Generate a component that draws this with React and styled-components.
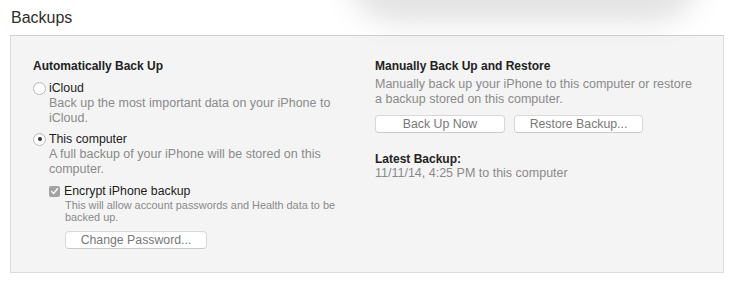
import React from "react";
import styled, { createGlobalStyle } from "styled-components";

const Global = createGlobalStyle`
  html, body { margin: 0; padding: 0; background: #ffffff; }
  body { font-family: "Liberation Sans", Arial, Helvetica, sans-serif; -webkit-font-smoothing: antialiased; }
`;

const Page = styled.div`
  position: relative;
  width: 732px;
  height: 286px;
  overflow: hidden;
  padding: 8px 9px 0 10px;
  box-sizing: border-box;
`;

const SheetShadow = styled.div`
  position: absolute;
  top: -62px;
  left: 365px;
  width: 318px;
  height: 62px;
  border-radius: 50px;
  background: #e6e6e6;
  box-shadow: 0 4px 28px 16px rgba(0, 0, 0, 0.13);
  filter: blur(7px);
`;

const Heading = styled.h2`
  margin: 0 0 0 1px;
  font-size: 16px;
  line-height: 19px;
  font-weight: normal;
  color: #2e2e2e;
`;

const Panel = styled.section`
  margin-top: 8px;
  width: 714px;
  height: 238px;
  box-sizing: border-box;
  background: #f4f4f4;
  border: 1px solid #dcdcdc;
  border-top-color: #d0d0d0;
  display: grid;
  grid-template-columns: 342px 1fr;
  padding: 23px 0 0 22px;
`;

const Column = styled.div`
  display: flex;
  flex-direction: column;
  align-items: flex-start;
`;

const SectionTitle = styled.div`
  font-size: 12px;
  line-height: 14px;
  font-weight: bold;
  color: #222222;
  margin-top: ${(p) => p.$mt ?? 0}px;
`;

const OptionRow = styled.label`
  display: flex;
  align-items: center;
  gap: ${(p) => p.$gap ?? 3}px;
  height: 16px;
  margin-top: ${(p) => p.$mt ?? 0}px;
  margin-left: ${(p) => p.$ml ?? 0}px;
  font-size: 12.3px;
  color: #1c1c1c;
`;

const Radio = styled.span`
  width: 11px;
  height: 11px;
  border-radius: 50%;
  border: 1px solid #b9b9b9;
  background: #ffffff;
  box-shadow: inset 0 1px 1px rgba(0, 0, 0, 0.05);
  display: flex;
  align-items: center;
  justify-content: center;
  flex: none;
  &::after {
    content: "";
    width: 4px;
    height: 4px;
    border-radius: 50%;
    background: ${(p) => (p.$checked ? "#333" : "transparent")};
  }
`;

const Checkbox = styled.span`
  width: 11px;
  height: 11px;
  border-radius: 2px;
  background: #a3a3a3;
  display: flex;
  align-items: center;
  justify-content: center;
  flex: none;
`;

const Description = styled.div`
  font-size: 12.5px;
  line-height: 15px;
  color: #8a8a8a;
  margin-left: ${(p) => p.$ml ?? 16}px;
  width: ${(p) => p.$w ?? 300}px;
  margin-top: ${(p) => p.$mt ?? 0}px;
`;

const SmallNote = styled.div`
  font-size: 10.9px;
  line-height: 12px;
  color: #8a8a8a;
  margin-left: 32px;
  width: 280px;
`;

const Button = styled.button`
  height: 18px;
  width: ${(p) => p.$w}px;
  box-sizing: border-box;
  background: #ffffff;
  border: 1px solid #d8d8d8;
  border-bottom-color: #cacaca;
  border-radius: 4px;
  font-family: inherit;
  font-size: 12.3px;
  color: #787878;
  padding: 0;
  line-height: 16px;
  margin-left: ${(p) => p.$ml ?? 0}px;
  margin-top: ${(p) => p.$mt ?? 0}px;
`;

const ButtonRow = styled.div`
  display: flex;
  gap: 9px;
  margin-top: ${(p) => p.$mt ?? 0}px;
`;

const Value = styled.div`
  font-size: 12.5px;
  line-height: 14px;
  color: #8a8a8a;
`;

export default function App() {
  return (
    <>
      <Global />
      <Page>
        <SheetShadow />
        <Heading>Backups</Heading>
        <Panel>
          <Column>
            <SectionTitle>Automatically Back Up</SectionTitle>
            <OptionRow $mt={7}>
              <Radio />
              iCloud
            </OptionRow>
            <Description $w={290}>Back up the most important data on your iPhone to iCloud.</Description>
            <OptionRow $mt={5}>
              <Radio $checked />
              This computer
            </OptionRow>
            <Description $w={290}>A full backup of your iPhone will be stored on this computer.</Description>
            <OptionRow $mt={6} $ml={16} $gap={4}>
              <Checkbox>
                <svg width="9" height="9" viewBox="0 0 9 9">
                  <path d="M1.6 4.6 L3.6 6.6 L7.4 1.8" fill="none" stroke="#ffffff" strokeWidth="1.4" strokeLinecap="round" strokeLinejoin="round" />
                </svg>
              </Checkbox>
              Encrypt iPhone backup
            </OptionRow>
            <SmallNote>This will allow account passwords and Health data to be backed up.</SmallNote>
            <Button $w={142} $ml={32} $mt={8}>Change Password...</Button>
          </Column>
          <Column>
            <SectionTitle>Manually Back Up and Restore</SectionTitle>
            <Description $ml={0} $w={322} $mt={4}>
              Manually back up your iPhone to this computer or restore a backup stored on this computer.
            </Description>
            <ButtonRow $mt={8}>
              <Button $w={130}>Back Up Now</Button>
              <Button $w={129}>Restore Backup...</Button>
            </ButtonRow>
            <SectionTitle $mt={19}>Latest Backup:</SectionTitle>
            <Value>11/11/14, 4:25 PM to this computer</Value>
          </Column>
        </Panel>
      </Page>
    </>
  );
}
